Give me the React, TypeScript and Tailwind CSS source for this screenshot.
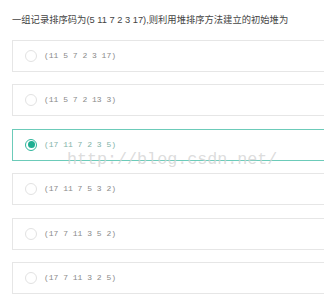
const options = [
  "(11 5 7 2 3 17)",
  "(11 5 7 2 13 3)",
  "(17 11 7 2 3 5)",
  "(17 11 7 5 3 2)",
  "(17 7 11 3 5 2)",
  "(17 7 11 3 2 5)",
];

const selected = 2;

function Radio({ checked }: { checked: boolean }) {
  if (checked) {
    return (
      <span className="flex h-[12px] w-[12px] shrink-0 items-center justify-center rounded-full border border-[#2fb69c] bg-white">
        <span className="h-[7px] w-[7px] rounded-full bg-[#1fae92]" />
      </span>
    );
  }
  return <span className="h-[12px] w-[12px] shrink-0 rounded-full border border-[#e2e2e2] bg-white" />;
}

export default function App() {
  return (
    <div className="relative h-[300px] w-[324px] overflow-hidden bg-white">
      <p className="pl-[12px] pt-[13px] text-[9.3px] leading-[14px] text-[#444] [font-family:'Liberation_Sans','Noto_Sans_CJK_SC',sans-serif]">
        一组记录排序码为(5 11 7 2 3 17),则利用堆排序方法建立的初始堆为
      </p>

      <div className="ml-[12px] mt-[13px] flex w-[330px] flex-col gap-[12.4px]">
        {options.map((opt, i) => (
          <div
            key={opt}
            className={
              "flex h-[32px] items-center gap-[7px] border pl-[12px] " +
              (i === selected ? "border-[#6ccbb9]" : "border-[#e6e6e6]")
            }
          >
            <Radio checked={i === selected} />
            <span
              className={
                "whitespace-pre text-[8px] leading-none [font-family:'Liberation_Mono',monospace] " +
                (i === selected ? "text-[#7fb3a8]" : "text-[#8a8a8a]")
              }
            >
              {opt}
            </span>
          </div>
        ))}
      </div>

      {/* watermark */}
      <div className="pointer-events-none absolute left-[67px] top-[150px] text-[16.7px] leading-[20px] text-[#d4d4d4]/80 [font-family:'Liberation_Mono',monospace]">
        http://blog.csdn.net/
      </div>
    </div>
  );
}
